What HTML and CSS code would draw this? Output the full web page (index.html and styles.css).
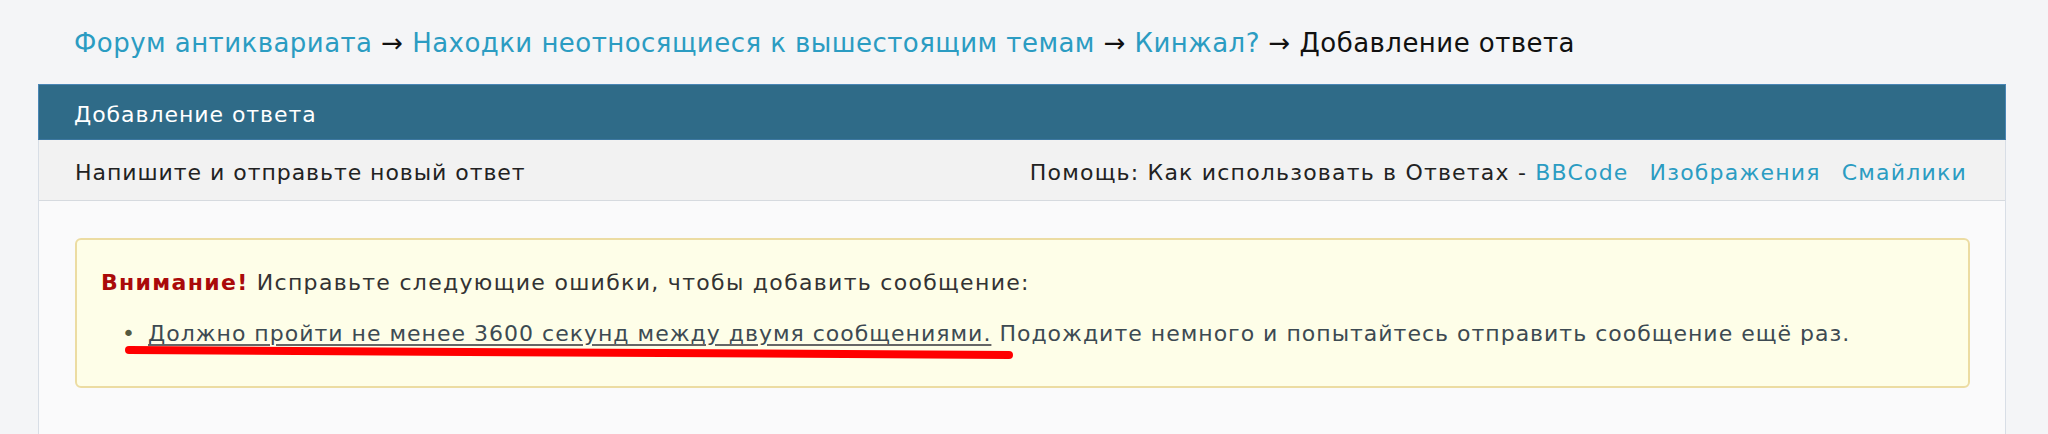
FILE: index.html
```html
<!DOCTYPE html>
<html lang="ru">
<head>
<meta charset="utf-8">
<title>Добавление ответа</title>
<link rel="stylesheet" href="styles.css">
</head>
<body>
<nav class="crumbs">
  <a href="#">Форум антиквариата</a> <span class="arr">→</span>
  <a href="#">Находки неотносящиеся к вышестоящим темам</a> <span class="arr">→</span>
  <a href="#">Кинжал?</a> <span class="arr">→</span>
  <span class="current">Добавление ответа</span>
</nav>
<section class="panel">
  <header class="panel-head">Добавление ответа</header>
  <div class="panel-sub">
    <span>Напишите и отправьте новый ответ</span>
    <span class="help">Помощь: Как использовать в Ответах - <a href="#">BBCode</a><a href="#">Изображения</a><a href="#">Смайлики</a></span>
  </div>
  <div class="panel-body">
    <div class="warn">
      <p class="warn-title"><strong>Внимание!</strong> Исправьте следующие ошибки, чтобы добавить сообщение:</p>
      <ul class="warn-list">
        <li><span class="marked">Должно пройти не менее 3600 секунд между двумя сообщениями.</span> Подождите немного и попытайтесь отправить сообщение ещё раз.</li>
      </ul>
      <svg class="marker" width="900" height="20" viewBox="0 0 900 20"><path d="M5 7 C 200 9, 500 10, 885 12" stroke="#ff0000" stroke-width="8" stroke-linecap="round" fill="none"/></svg>
    </div>
  </div>
</section>
</body>
</html>
```
FILE: styles.css
```css
html, body {
  margin: 0;
  padding: 0;
}
body {
  background: #f4f5f7;
  font-family: "DejaVu Sans", Verdana, sans-serif;
  color: #222;
  height: 434px;
  overflow: hidden;
}
a {
  color: #2b9cc2;
  text-decoration: none;
}
.crumbs {
  padding: 25px 0 0 74px;
  height: 84px;
  box-sizing: border-box;
  font-size: 26px;
  letter-spacing: 0.45px;
  line-height: 36px;
  white-space: nowrap;
}
.crumbs .arr {
  color: #111;
}
.crumbs .current {
  color: #111;
}
.panel {
  margin: 0 42px 0 38px;
  border-left: 1px solid #d8dee6;
  border-right: 1px solid #d8dee6;
  background: #fafafb;
  height: 350px;
}
.panel-head {
  height: 56px;
  background: #2f6b88;
  border: 1px solid #4a86b5;
  border-bottom-color: #3c77a0;
  box-sizing: border-box;
  margin: 0 -1px;
  color: #fff;
  font-size: 22px;
  letter-spacing: 0.95px;
  display: flex;
  align-items: center;
  padding: 5px 0 0 35px;
}
.panel-sub {
  height: 61px;
  box-sizing: border-box;
  background: #f2f2f2;
  border-bottom: 1px solid #d6dadf;
  display: flex;
  align-items: center;
  justify-content: space-between;
  padding: 5px 38px 0 36px;
  font-size: 22px;
  letter-spacing: 0.95px;
  color: #222;
}
.help {
  letter-spacing: 1.2px;
}
.help a + a {
  margin-left: 21px;
}
.panel-body {
  padding: 37px 35px 0 36px;
}
.warn {
  position: relative;
  height: 150px;
  box-sizing: border-box;
  background: #fefee8;
  border: 2px solid #ecdca2;
  border-radius: 6px;
  padding: 28px 24px 0 24px;
  font-size: 22px;
  letter-spacing: 1px;
  color: #333;
}
.warn-title {
  margin: 0;
  line-height: 30px;
  letter-spacing: 1.3px;
}
.warn-title strong {
  color: #aa0a0a;
}
.warn-list {
  margin: 21px 0 0 0;
  padding: 0 0 0 21px;
  list-style: none;
  line-height: 30px;
  color: #3d4a52;
}
.warn-list li::before {
  content: "•";
  color: #555a40;
  margin-right: 12px;
}
.marked {
  text-decoration: underline;
  text-decoration-color: #666;
  text-underline-offset: 3px;
}
.marker {
  position: absolute;
  left: 47px;
  top: 103px;
}
```
